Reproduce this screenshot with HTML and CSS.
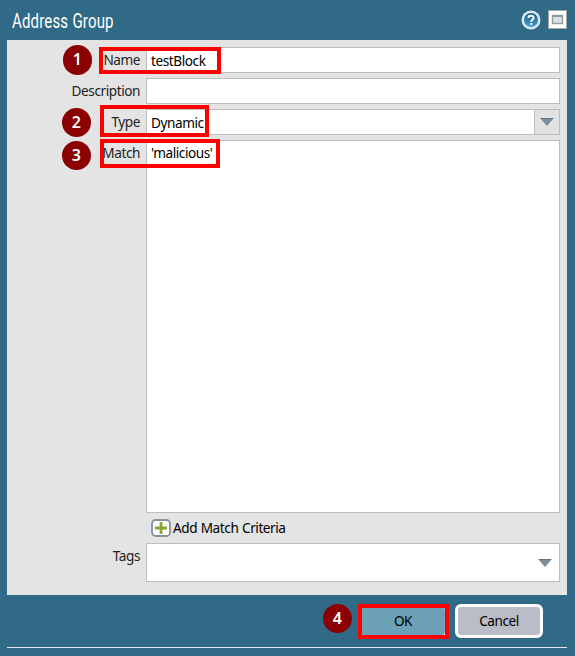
FILE: index.html
```html
<!DOCTYPE html>
<html lang="en">
<head>
<meta charset="utf-8">
<title>Address Group</title>
<link rel="stylesheet" href="styles.css">
</head>
<body>
<main class="dialog">
  <header class="titlebar">
    <h1 class="title">Address Group</h1>
    <svg class="tool" width="20" height="20" viewBox="0 0 20 20" aria-label="Help">
      <defs><linearGradient id="help" x2="0" y2="1"><stop offset="0" stop-color="#175886"/><stop offset="1" stop-color="#49a0ca"/></linearGradient></defs>
      <circle cx="10" cy="10" r="9.5" fill="#d7e8f5"/>
      <circle cx="10" cy="10" r="7" fill="url(#help)"/>
      <path d="M7.3 8.1C7.3 4.9 12.6 5 12.6 8c0 1.8-2.4 1.8-2.4 3.7M10.2 13v1.8" fill="none" stroke="#fff" stroke-width="2"/>
    </svg>
    <svg class="tool" width="19" height="19" viewBox="0 0 19 19" aria-label="Maximize">
      <rect x=".5" y=".5" width="18" height="18" fill="#fff" stroke="#a5a5a5"/>
      <rect x="4.5" y="5.5" width="10" height="8" fill="#dcdee4" stroke="#969da3" stroke-width="1.4"/>
      <path d="M4 6h11" stroke="#929aa1" stroke-width="2"/>
    </svg>
  </header>
  <form class="form">
    <label class="label">Name</label>
    <div class="field">testBlock</div>
    <label class="label">Description</label>
    <div class="field"></div>
    <label class="label">Type</label>
    <div class="field select">Dynamic<span class="trigger"><svg width="14" height="8" viewBox="0 0 14 8"><path d="M0 0h14L7 8z" fill="#7d8d99"/><path d="M1 .5h12" stroke="#637582"/></svg></span></div>
    <label class="label">Match</label>
    <div class="field match">'malicious'</div>
    <div class="add">
      <svg width="20" height="18" viewBox="0 0 20 18"><rect x="1" y="1" width="18" height="16" rx="3.5" fill="#fff" stroke="#8292a0" stroke-width="1.8"/><path d="M4 9h12M10 3v12" stroke="#8da334" stroke-width="2.8"/></svg>
      <span>Add Match Criteria</span>
    </div>
    <label class="label">Tags</label>
    <div class="field tags"><svg width="14" height="8" viewBox="0 0 14 8"><path d="M0 0h14L7 8z" fill="#7d8d99"/><path d="M1 .5h12" stroke="#637582"/></svg></div>
  </form>
  <footer class="footer">
    <button class="button ok">OK</button>
    <button class="button cancel">Cancel</button>
  </footer>
</main>
<div class="box box1"></div><div class="box box2"></div><div class="box box3"></div><div class="box box4"></div>
<div class="step step1">1</div><div class="step step2">2</div><div class="step step3">3</div><div class="step step4">4</div>
</body>
</html>
```
FILE: styles.css
```css
* { box-sizing: border-box; }
body { margin: 0; width: 575px; height: 656px; overflow: hidden; position: relative; background: #306a87; color: #000; font: 13.6px/20px "Noto Sans", sans-serif; letter-spacing: -.43px; word-spacing: .5px; }
.dialog { margin: 0 8px 0 7px; height: 648px; border-bottom: 1px solid #e1e9ed; }
.titlebar { height: 40px; display: flex; align-items: flex-start; padding: 10px 0 0 5px; }
.title { margin: 0 auto 0 0; white-space: nowrap; color: #fff; font: 400 19.5px/23px Roboto, sans-serif; letter-spacing: .2px; transform: scaleX(.77); transform-origin: left; }
.tool { margin-right: 7px; flex: none; }
.tool:last-child { margin-right: 0; }
.form { height: 555px; background: #e4e4e4; padding: 7px 7px 0 0; display: grid; grid-template-columns: 139px 414px; grid-template-rows: 31px 31px 31px 373px 30px 39px; align-content: start; }
.label { height: 26px; text-align: right; padding-right: 6px; line-height: 26px; color: #222; white-space: nowrap; }
.field { height: 26px; background: #fff; border: 1px solid #bcbcbc; padding-left: 4px; line-height: 26px; display: flex; }
.select { justify-content: space-between; }
.trigger { width: 25px; background: #e2e2e2; border-left: 1px solid #bcbcbc; display: flex; align-items: center; justify-content: center; }
.match { height: 373px; line-height: 24px; }
.add { grid-column: 2; display: flex; align-items: center; gap: 2px; padding-left: 5px; }
.tags { height: 39px; align-items: center; justify-content: flex-end; padding-right: 7px; }
.footer { display: flex; justify-content: flex-end; gap: 7px; padding: 9px 24px 0 0; }
.button { height: 34px; font: inherit; letter-spacing: inherit; color: #000; border: 3px solid #fff; border-radius: 6px; padding: 0; }
.ok { width: 90px; background: #6ba0b7; }
.cancel { width: 88px; background: #babdc7; }
.box { position: absolute; border: 4px solid #f00; }
.box1 { left: 99px; top: 47px; width: 122px; height: 27px; }
.box2 { left: 100px; top: 105px; width: 109px; height: 32px; }
.box3 { left: 100px; top: 139px; width: 120px; height: 29px; }
.box4 { left: 358px; top: 604px; width: 91px; height: 35px; }
.step { position: absolute; width: 29.5px; height: 29.5px; border-radius: 50%; background: #8b0000; color: #fff; text-align: center; font: 600 16px/28px "Noto Sans", sans-serif; letter-spacing: 0; }
.step1 { left: 62.5px; top: 45px; }
.step2 { left: 61.7px; top: 107.5px; }
.step3 { left: 61.7px; top: 140.7px; }
.step4 { left: 322.7px; top: 603.7px; }
```
